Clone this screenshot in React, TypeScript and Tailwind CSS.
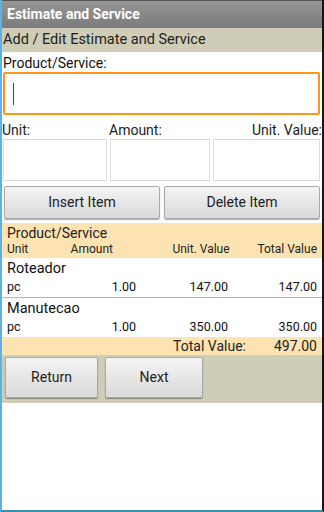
import React from "react";

const rows = [
  { name: "Roteador", unit: "pc", amount: "1.00", value: "147.00", total: "147.00" },
  { name: "Manutecao", unit: "pc", amount: "1.00", value: "350.00", total: "350.00" },
];

const btn =
  "flex items-center justify-center rounded-[2px] border border-[#a9a9a9] bg-gradient-to-b from-[#f4f4f4] to-[#d9d9d9] text-[14px] text-[#222] shadow-[0_1px_1px_rgba(0,0,0,0.35)]";

export default function App() {
  return (
    <div
      className="flex h-[512px] w-[324px] flex-col overflow-hidden border-b-2 border-l-2 border-r-2 border-b-[#3b8fb6] border-l-[#62b0dc] border-r-[#151515] bg-white"
      style={{ fontFamily: "Roboto, 'Noto Sans', sans-serif" }}
    >
      {/* title */}
      <div className="flex h-[28px] items-center border-t border-[#555] bg-gradient-to-b from-[#969696] to-[#7b7b7b] pl-[5px] text-[14px] font-bold text-white">
        Estimate and Service
      </div>
      <div className="flex h-[24px] items-center bg-[#cfcdb5] pl-[1px] text-[14.5px] text-[#222]">
        Add / Edit Estimate and Service
      </div>

      <div className="mt-[2px] h-[18px] pl-[1px] text-[14px] leading-[18px] text-[#111]">Product/Service:</div>
      <div className="ml-[1px] mr-[2px] flex h-[43px] items-center rounded-[2px] border-2 border-[#ff9416] pl-[8px]">
        <div className="h-[22px] w-px bg-[#444]" />
      </div>

      <div className="mt-[6px] flex h-[18px] items-center text-[14px] text-[#222]">
        <span className="w-[107px]">Unit:</span>
        <span>Amount:</span>
        <span className="ml-auto">Unit. Value:</span>
      </div>
      <div className="ml-[1px] mr-[2px] flex h-[42px] gap-[3px]">
        <div className="w-[104px] border border-[#dcdcdc]" />
        <div className="w-[100px] border border-[#dcdcdc]" />
        <div className="flex-1 border border-[#dcdcdc]" />
      </div>

      <div className="ml-[2px] mr-[2px] mt-[5px] flex h-[33px] gap-[4px]">
        <button className={btn + " w-[156px]"}>Insert Item</button>
        <button className={btn + " flex-1"}>Delete Item</button>
      </div>

      <div className="mt-[4px] bg-[#fde3b1] px-[5px] pb-[2px] pt-[1px] text-[#222]">
        <div className="text-[14px] leading-[18px]">Product/Service</div>
        <div className="flex text-[12px] leading-[14px]">
          <span className="w-[64px]">Unit</span>
          <span className="w-[60px]">Amount</span>
          <span className="ml-auto w-[100px] text-right">Unit. Value</span>
          <span className="w-[88px] text-right">Total Value</span>
        </div>
      </div>

      {rows.map((r, i) => (
        <div
          key={r.name}
          className={"px-[5px] pb-[2px] pt-[1px] text-[#111] " + (i === 0 ? "border-b border-[#b5b5b5]" : "")}
        >
          <div className="text-[14.5px] leading-[20px]">{r.name}</div>
          <div className="flex text-[12.5px] leading-[16px]">
            <span className="w-[40px]">{r.unit}</span>
            <span className="w-[89px] text-right">{r.amount}</span>
            <span className="w-[92px] text-right">{r.value}</span>
            <span className="flex-1 text-right">{r.total}</span>
          </div>
        </div>
      ))}

      <div className="flex h-[18px] items-center bg-[#fde3b1] pr-[5px] text-[14px] text-[#222]">
        <span className="ml-auto">Total Value:</span>
        <span className="w-[71px] text-right">497.00</span>
      </div>

      <div className="flex h-[48px] items-start gap-[7px] bg-[#cfcdb5] pl-[3px] pt-[2px]">
        <button className={btn + " h-[41px] w-[93px]"}>Return</button>
        <button className={btn + " h-[41px] w-[98px]"}>Next</button>
      </div>

      <div className="flex-1 bg-white" />
    </div>
  );
}
